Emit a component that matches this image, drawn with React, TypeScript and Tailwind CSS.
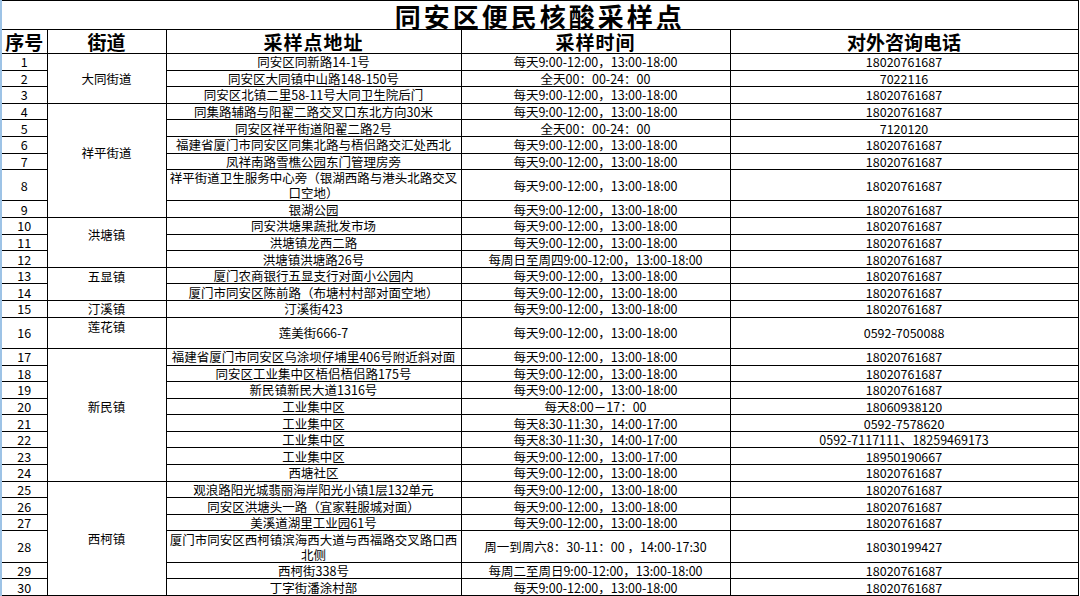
import React from 'react';

const STD = '每天9:00-12:00，13:00-18:00';
const TEL = '18020761687';

type Row = { no: number; addr: string[]; time: string; tel: string; tall?: boolean };

const rows: Row[] = [
  { no: 1, addr: ['同安区同新路14-1号'], time: STD, tel: TEL },
  { no: 2, addr: ['同安区大同镇中山路148-150号'], time: '全天00：00-24：00', tel: '7022116' },
  { no: 3, addr: ['同安区北镇二里58-11号大同卫生院后门'], time: STD, tel: TEL },
  { no: 4, addr: ['同集路辅路与阳翟二路交叉口东北方向30米'], time: STD, tel: TEL },
  { no: 5, addr: ['同安区祥平街道阳翟二路2号'], time: '全天00：00-24：00', tel: '7120120' },
  { no: 6, addr: ['福建省厦门市同安区同集北路与梧侣路交汇处西北'], time: STD, tel: TEL },
  { no: 7, addr: ['凤祥南路雪樵公园东门管理房旁'], time: STD, tel: TEL },
  { no: 8, addr: ['祥平街道卫生服务中心旁（银湖西路与港头北路交叉', '口空地）'], time: STD, tel: TEL, tall: true },
  { no: 9, addr: ['银湖公园'], time: STD, tel: TEL },
  { no: 10, addr: ['同安洪塘果蔬批发市场'], time: STD, tel: TEL },
  { no: 11, addr: ['洪塘镇龙西二路'], time: STD, tel: TEL },
  { no: 12, addr: ['洪塘镇洪塘路26号'], time: '每周日至周四9:00-12:00，13:00-18:00', tel: TEL },
  { no: 13, addr: ['厦门农商银行五显支行对面小公园内'], time: STD, tel: TEL },
  { no: 14, addr: ['厦门市同安区陈前路（布塘村村部对面空地）'], time: STD, tel: TEL },
  { no: 15, addr: ['汀溪街423'], time: STD, tel: TEL },
  { no: 16, addr: ['莲美街666-7'], time: STD, tel: '0592-7050088', tall: true },
  { no: 17, addr: ['福建省厦门市同安区乌涂坝仔埔里406号附近斜对面'], time: STD, tel: TEL },
  { no: 18, addr: ['同安区工业集中区梧侣梧侣路175号'], time: STD, tel: TEL },
  { no: 19, addr: ['新民镇新民大道1316号'], time: STD, tel: TEL },
  { no: 20, addr: ['工业集中区'], time: '每天8:00－17：00', tel: '18060938120' },
  { no: 21, addr: ['工业集中区'], time: '每天8:30-11:30，14:00-17:00', tel: '0592-7578620' },
  { no: 22, addr: ['工业集中区'], time: '每天8:30-11:30，14:00-17:00', tel: '0592-7117111、18259469173' },
  { no: 23, addr: ['工业集中区'], time: '每天9:00-12:00，13:00-17:00', tel: '18950190667' },
  { no: 24, addr: ['西塘社区'], time: STD, tel: TEL },
  { no: 25, addr: ['观浪路阳光城翡丽海岸阳光小镇1层132单元'], time: STD, tel: TEL },
  { no: 26, addr: ['同安区洪塘头一路（宜家鞋服城对面）'], time: STD, tel: TEL },
  { no: 27, addr: ['美溪道湖里工业园61号'], time: STD, tel: TEL },
  { no: 28, addr: ['厦门市同安区西柯镇滨海西大道与西福路交叉路口西', '北侧'], time: '周一到周六8：30-11：00 ，14:00-17:30', tel: '18030199427', tall: true },
  { no: 29, addr: ['西柯街338号'], time: '每周二至周日9:00-12:00，13:00-18:00', tel: TEL },
  { no: 30, addr: ['丁字街潘涂村部'], time: STD, tel: TEL },
];

// merged street cells, keyed by first row
const streets: Record<number, { name: string; span: number; cls: string }> = {
  1: { name: '大同街道', span: 3, cls: 'align-middle' },
  4: { name: '祥平街道', span: 6, cls: 'align-middle pb-[16px]' },
  10: { name: '洪塘镇', span: 3, cls: 'align-middle pb-[16px]' },
  13: { name: '五显镇', span: 2, cls: 'align-middle pb-[14px]' },
  15: { name: '汀溪镇', span: 1, cls: 'align-middle' },
  16: { name: '莲花镇', span: 1, cls: 'align-top pt-[1px]' },
  17: { name: '新民镇', span: 8, cls: 'align-middle pb-[16px]' },
  25: { name: '西柯镇', span: 6, cls: 'align-middle' },
};

const cell = 'border border-black p-0 text-center align-middle';

export default function App() {
  return (
    <div className="w-[1080px] h-[596px] overflow-hidden bg-white text-black font-['Noto_Sans_CJK_SC',sans-serif]">
      <table className="table-fixed border-collapse w-[1077px]">
        <colgroup>
          <col className="w-[46px]" />
          <col className="w-[119px]" />
          <col className="w-[295px]" />
          <col className="w-[269px]" />
          <col className="w-[348px]" />
        </colgroup>
        <thead>
          <tr className="h-[28px]">
            <th
              colSpan={5}
              className="border border-black border-l-2 border-l-[#9dc3e6] p-0 pt-[2px] text-[26px] font-bold leading-[26px] tracking-[3px]"
            >
              同安区便民核酸采样点
            </th>
          </tr>
          <tr className="h-[24px]">
            <th className={`${cell} border-l-2 border-l-[#9dc3e6] text-[19px] font-bold leading-[22px]`}>序号</th>
            <th className={`${cell} text-[19px] font-bold leading-[22px]`}>街道</th>
            <th className={`${cell} text-[19px] font-bold leading-[22px] tracking-[1px]`}>采样点地址</th>
            <th className={`${cell} text-[19px] font-bold leading-[22px] tracking-[1px]`}>采样时间</th>
            <th className={`${cell} text-[19px] font-bold leading-[22px]`}>对外咨询电话</th>
          </tr>
        </thead>
        <tbody className="text-[12.5px] leading-[15px]">
          {rows.map((r) => {
            const st = streets[r.no];
            return (
              <tr key={r.no} className={r.tall ? 'h-[31.3px]' : 'h-[16.6px]'}>
                <td className={`${cell} border-l-2 border-l-[#9dc3e6]`}>{r.no}</td>
                {st && (
                  <td rowSpan={st.span} className={`border border-black p-0 text-center ${st.cls}`}>
                    {st.name}
                  </td>
                )}
                <td className={cell}>
                  {r.addr.map((line, i) => (
                    <div key={i}>{line}</div>
                  ))}
                </td>
                <td className={`${cell} whitespace-nowrap`}>{r.time}</td>
                <td className={cell}>{r.tel}</td>
              </tr>
            );
          })}
        </tbody>
      </table>
    </div>
  );
}
